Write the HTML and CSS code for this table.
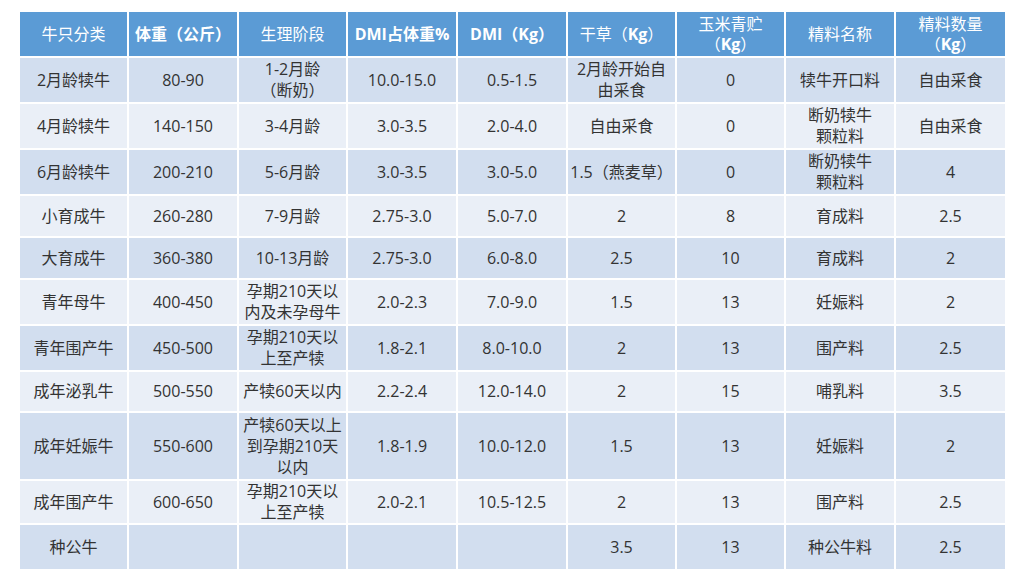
FILE: index.html
```html
<!DOCTYPE html>
<html lang="zh-CN">
<head>
<meta charset="utf-8">
<title>牛只饲喂标准</title>
<link rel="stylesheet" href="styles.css">
</head>
<body>
<table class="feed">
  <colgroup>
    <col class="c109"><col class="c110"><col class="c109"><col class="c110"><col class="c110"><col class="c109"><col class="c109"><col class="c110"><col class="c109">
  </colgroup>
  <thead>
    <tr class="hd">
      <th>牛只分类</th>
      <th class="b">体重（公斤）</th>
      <th>生理阶段</th>
      <th class="b">DMI占体重%</th>
      <th class="b">DMI（Kg）</th>
      <th>干草（<b>Kg</b>）</th>
      <th class="tight">玉米青贮<br>（<b>Kg</b>）</th>
      <th>精料名称</th>
      <th class="tight">精料数量<br>（<b>Kg</b>）</th>
    </tr>
  </thead>
  <tbody>
    <tr class="dark h46">
      <td>2月龄犊牛</td><td>80-90</td><td>1-2月龄<br>（断奶）</td><td>10.0-15.0</td><td>0.5-1.5</td><td>2月龄开始自<br>由采食</td><td>0</td><td>犊牛开口料</td><td>自由采食</td>
    </tr>
    <tr class="light h46">
      <td>4月龄犊牛</td><td>140-150</td><td>3-4月龄</td><td>3.0-3.5</td><td>2.0-4.0</td><td>自由采食</td><td>0</td><td>断奶犊牛<br>颗粒料</td><td>自由采食</td>
    </tr>
    <tr class="dark h46">
      <td>6月龄犊牛</td><td>200-210</td><td>5-6月龄</td><td>3.0-3.5</td><td>3.0-5.0</td><td class="nw">1.5（燕麦草）</td><td>0</td><td>断奶犊牛<br>颗粒料</td><td>4</td>
    </tr>
    <tr class="light h42">
      <td>小育成牛</td><td>260-280</td><td>7-9月龄</td><td>2.75-3.0</td><td>5.0-7.0</td><td>2</td><td>8</td><td>育成料</td><td>2.5</td>
    </tr>
    <tr class="dark h42">
      <td>大育成牛</td><td>360-380</td><td>10-13月龄</td><td>2.75-3.0</td><td>6.0-8.0</td><td>2.5</td><td>10</td><td>育成料</td><td>2</td>
    </tr>
    <tr class="light h46">
      <td>青年母牛</td><td>400-450</td><td>孕期210天以<br>内及未孕母牛</td><td>2.0-2.3</td><td>7.0-9.0</td><td>1.5</td><td>13</td><td>妊娠料</td><td>2</td>
    </tr>
    <tr class="dark h46">
      <td>青年围产牛</td><td>450-500</td><td>孕期210天以<br>上至产犊</td><td>1.8-2.1</td><td>8.0-10.0</td><td>2</td><td>13</td><td>围产料</td><td>2.5</td>
    </tr>
    <tr class="light h41">
      <td>成年泌乳牛</td><td>500-550</td><td class="nw">产犊60天以内</td><td>2.2-2.4</td><td>12.0-14.0</td><td>2</td><td>15</td><td>哺乳料</td><td>3.5</td>
    </tr>
    <tr class="dark h68">
      <td>成年妊娠牛</td><td>550-600</td><td class="nw">产犊60天以上<br>到孕期210天<br>以内</td><td>1.8-1.9</td><td>10.0-12.0</td><td>1.5</td><td>13</td><td>妊娠料</td><td>2</td>
    </tr>
    <tr class="light h43">
      <td>成年围产牛</td><td>600-650</td><td>孕期210天以<br>上至产犊</td><td>2.0-2.1</td><td>10.5-12.5</td><td>2</td><td>13</td><td>围产料</td><td>2.5</td>
    </tr>
    <tr class="dark h44 last">
      <td>种公牛</td><td></td><td></td><td></td><td></td><td>3.5</td><td>13</td><td>种公牛料</td><td>2.5</td>
    </tr>
  </tbody>
</table>
</body>
</html>
```

FILE: styles.css
```css
html, body {
  margin: 0;
  padding: 0;
  background: #ffffff;
}

body {
  padding: 12px 0 0 20px;
  font-family: "Open Sans", "Noto Sans CJK SC", sans-serif;
  color: #333333;
}

.feed {
  table-layout: fixed;
  width: 985px;
  border-collapse: separate;
  border-spacing: 0;
}

.c109 { width: 109px; }
.c110 { width: 110px; }

.feed th,
.feed td {
  box-sizing: border-box;
  padding: 0 1px;
  text-align: center;
  vertical-align: middle;
  border-right: 2px solid #ffffff;
  border-bottom: 2px solid #ffffff;
  font-size: 16px;
  line-height: 21px;
}

.feed th:last-child,
.feed td:last-child {
  border-right: 0;
}

.hd th {
  background: #5b9bd5;
  color: #ffffff;
  height: 46px;
  font-size: 16px;
  font-weight: normal;
  line-height: 20px;
}

.hd th.b,
.hd th b {
  font-weight: bold;
}

.dark td { background: #d2deef; }
.light td { background: #eaeff7; }

.h41 td { height: 41px; }
.h42 td { height: 42px; }
.h43 td { height: 43px; }
.h44 td { height: 44px; }
.h46 td { height: 46px; }
.h68 td { height: 68px; }

.last td { border-bottom: 0; }

.nw {
  white-space: nowrap;
}
```
